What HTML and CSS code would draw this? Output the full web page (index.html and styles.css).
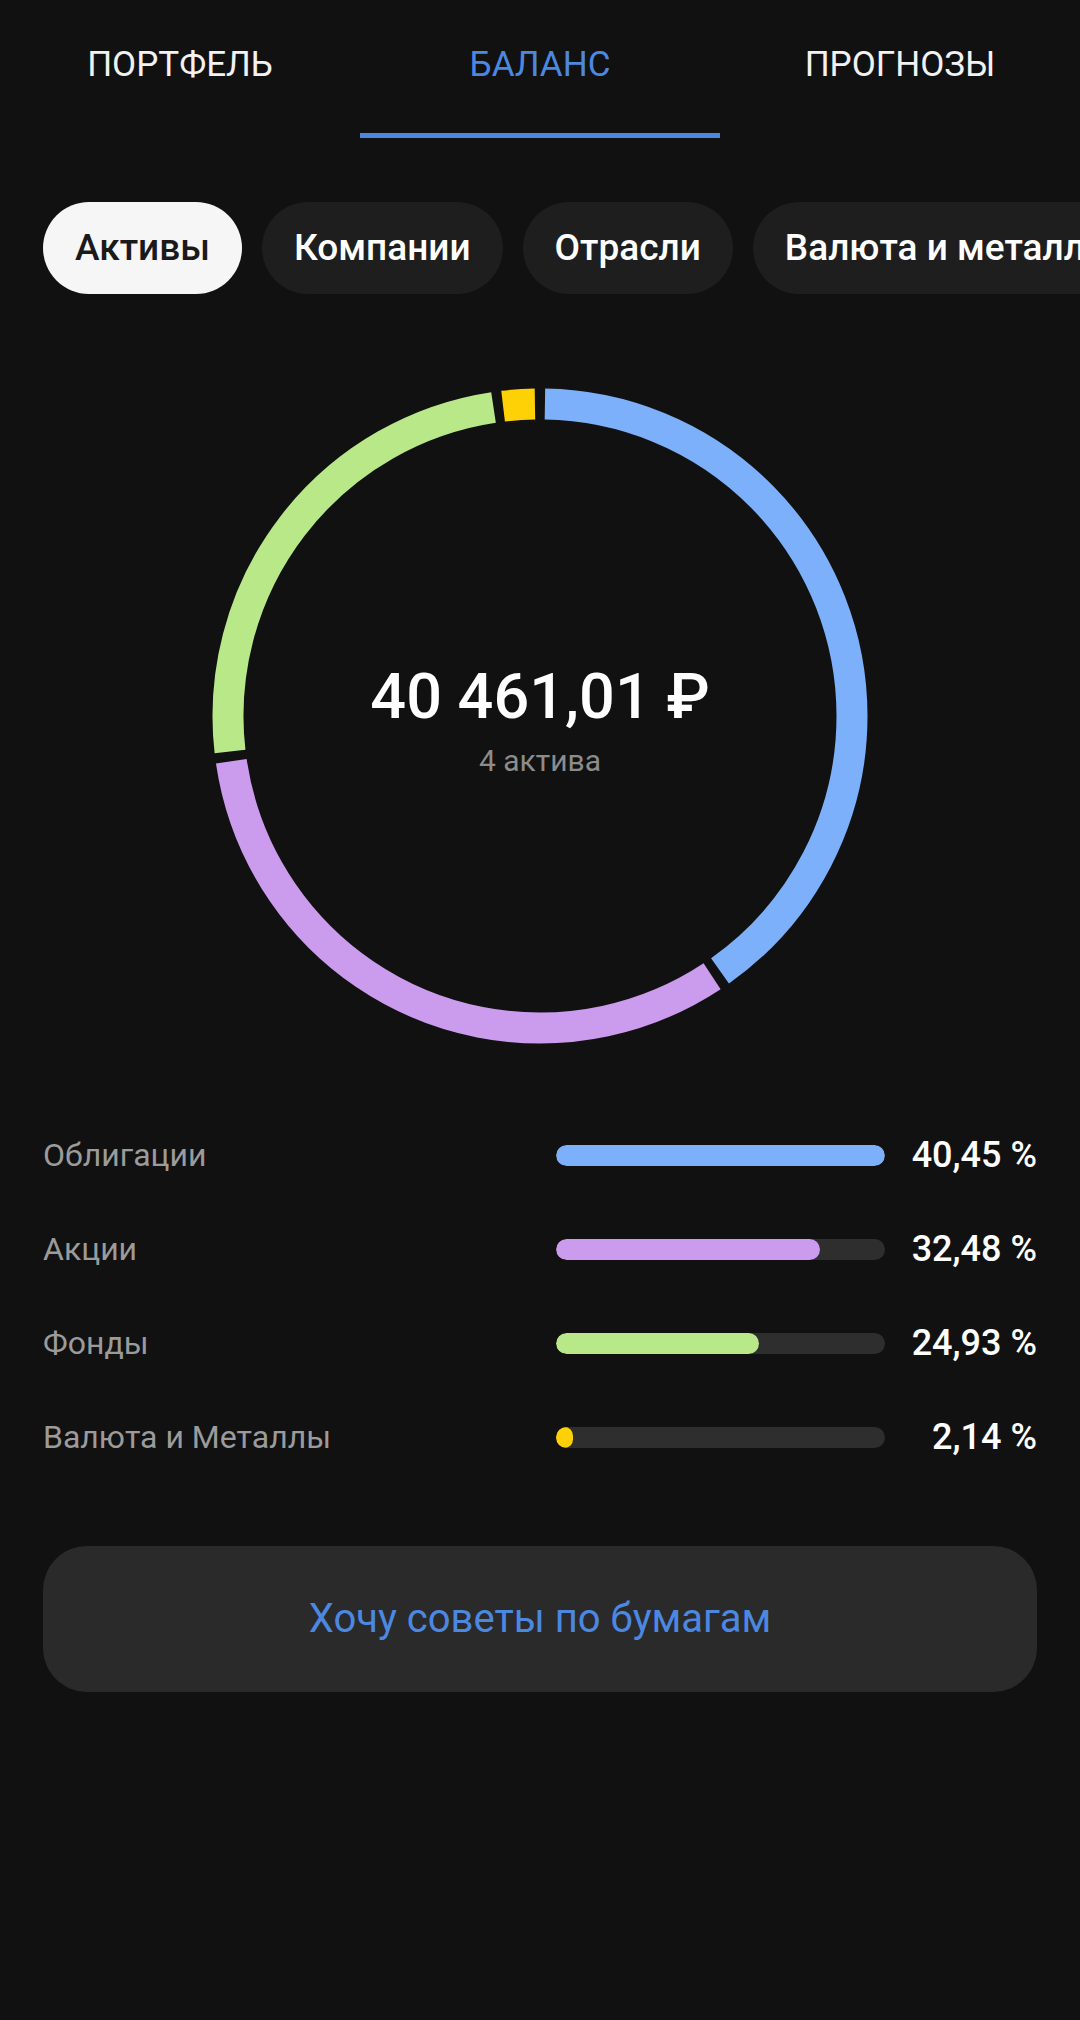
FILE: index.html
```html
<!DOCTYPE html>
<html lang="ru">

<head>
    <meta charset="UTF-8">
    <meta name="viewport" content="width=device-width, initial-scale=1.0">
    <title>Баланс</title>
    <link rel="stylesheet" href="styles.css">
</head>

<body>
    <nav class="tabs">
        <a href="javascript:;" class="tab">ПОРТФЕЛЬ</a>
        <a href="javascript:;" class="tab active">БАЛАНС</a>
        <a href="javascript:;" class="tab">ПРОГНОЗЫ</a>
    </nav>

    <div class="chips">
        <a href="javascript:;" class="chip current">Активы</a>
        <a href="javascript:;" class="chip">Компании</a>
        <a href="javascript:;" class="chip">Отрасли</a>
        <a href="javascript:;" class="chip">Валюта и металлы</a>
    </div>

    <div class="donut">
        <svg width="660" height="660" viewBox="0 0 660 660">
            <!-- длина окружности r=312: 1960.35, зазор между долями 10px -->
            <circle cx="330" cy="330" r="312" fill="none" stroke="#7db0fb" stroke-width="31"
                stroke-dasharray="782.96 1960.35" stroke-dashoffset="-5" transform="rotate(-90 330 330)" />
            <circle cx="330" cy="330" r="312" fill="none" stroke="#cb9bee" stroke-width="31"
                stroke-dasharray="626.72 1960.35" stroke-dashoffset="-5" transform="rotate(55.62 330 330)" />
            <circle cx="330" cy="330" r="312" fill="none" stroke="#b9e888" stroke-width="31"
                stroke-dasharray="478.72 1960.35" stroke-dashoffset="-5" transform="rotate(172.55 330 330)" />
            <circle cx="330" cy="330" r="312" fill="none" stroke="#fed106" stroke-width="31"
                stroke-dasharray="31.95 1960.35" stroke-dashoffset="-5" transform="rotate(262.30 330 330)" />
        </svg>
        <div class="total">
            <div class="sum">40 461,01 ₽</div>
            <div class="count">4 актива</div>
        </div>
    </div>

    <ul class="legend">
        <li>
            <span class="name">Облигации</span>
            <span class="track"><i class="fill blue" style="width: 100%"></i></span>
            <span class="pct">40,45 %</span>
        </li>
        <li>
            <span class="name">Акции</span>
            <span class="track"><i class="fill purple" style="width: 80.3%"></i></span>
            <span class="pct">32,48 %</span>
        </li>
        <li>
            <span class="name">Фонды</span>
            <span class="track"><i class="fill green" style="width: 61.6%"></i></span>
            <span class="pct">24,93 %</span>
        </li>
        <li>
            <span class="name">Валюта и Металлы</span>
            <span class="track"><i class="fill yellow" style="width: 5.3%"></i></span>
            <span class="pct">2,14 %</span>
        </li>
    </ul>

    <a href="javascript:;" class="advice">Хочу советы по бумагам</a>
</body>

</html>
```

FILE: styles.css
```css
* {
    margin: 0;
    padding: 0;
    box-sizing: border-box;
}

body {
    width: 1080px;
    min-height: 2020px;
    background-color: #111111;
    font-family: Roboto, "Noto Sans", sans-serif;
    color: #fff;
    overflow: hidden;
}

li {
    list-style-type: none;
}

a {
    text-decoration: none;
    color: inherit;
}

.tabs {
    display: flex;
}

.tab {
    flex: 1;
    height: 138px;
    line-height: 130px;
    text-align: center;
    font-size: 35px;
    color: #f2f2f2;
    border-bottom: 5px solid transparent;
}

.tab.active {
    color: #4d88e0;
    border-bottom-color: #4d88e0;
}

.chips {
    display: flex;
    gap: 20px;
    margin-top: 64px;
    padding-left: 43px;
    white-space: nowrap;
    overflow: hidden;
}

.chip {
    flex-shrink: 0;
    height: 92px;
    line-height: 92px;
    padding: 0 32px;
    border-radius: 46px;
    background-color: #1e1e1e;
    font-size: 37px;
    font-weight: 500;
    color: #fff;
}

.chip.current {
    background-color: #f6f6f6;
    color: #1a1a1a;
}

.donut {
    position: relative;
    width: 660px;
    height: 660px;
    margin: 92px auto 0;
}

.donut svg {
    display: block;
}

.total {
    position: absolute;
    left: 0;
    right: 0;
    top: 273px;
    text-align: center;
}

.sum {
    font-size: 63px;
    font-weight: 500;
    line-height: 76px;
}

.count {
    font-size: 30px;
    color: #8c8c8c;
    line-height: 40px;
    margin-top: 6px;
}

.legend {
    margin-top: 62px;
    padding: 0 43px;
}

.legend li {
    display: grid;
    grid-template-columns: 1fr 329px 152px;
    align-items: center;
    height: 94px;
}

.name {
    font-size: 32px;
    color: #9b9b9b;
}

.track {
    height: 21px;
    border-radius: 11px;
    background-color: #2e2e2e;
    overflow: hidden;
}

.fill {
    display: block;
    height: 100%;
    border-radius: 11px;
}

.blue {
    background-color: #7db0fb;
}

.purple {
    background-color: #cb9bee;
}

.green {
    background-color: #b9e888;
}

.yellow {
    background-color: #fed106;
}

.pct {
    text-align: right;
    font-size: 36px;
    font-weight: 500;
}

.advice {
    display: block;
    height: 146px;
    line-height: 146px;
    margin: 62px 43px 0;
    border-radius: 44px;
    background-color: #2a2a2a;
    text-align: center;
    font-size: 40px;
    color: #4d88e0;
}
```
